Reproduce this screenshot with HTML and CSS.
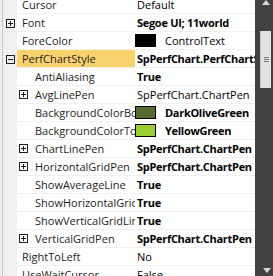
FILE: index.html
```html
<!DOCTYPE html>
<html>
<head>
<meta charset="utf-8">
<link rel="stylesheet" href="styles.css">
</head>
<body>
<div class="grid">
  <div class="rows">
    <div class="row"><div class="margin"></div><div class="name">Cursor</div><div class="value">Default</div></div>
    <div class="row"><div class="margin"><svg class="exp" width="9" height="9" viewBox="0 0 9 9"><rect x="0.5" y="0.5" width="8" height="8" fill="none" stroke="#1e1e1e"/><path d="M2 4.5H7M4.5 2V7" stroke="#1e1e1e"/></svg></div><div class="name">Font</div><div class="value bold">Segoe UI; 11world</div></div>
    <div class="row"><div class="margin"></div><div class="name">ForeColor</div><div class="value"><span class="swatch sw-black"></span>ControlText</div></div>
    <div class="row"><div class="margin"><svg class="exp" width="9" height="9" viewBox="0 0 9 9"><rect x="0.5" y="0.5" width="8" height="8" fill="none" stroke="#1e1e1e"/><path d="M2 4.5H7" stroke="#1e1e1e"/></svg></div><div class="name selected">PerfChartStyle</div><div class="value bold">SpPerfChart.PerfChartStyle</div></div>
    <div class="row"><div class="margin"></div><div class="name sub">AntiAliasing</div><div class="value bold">True</div></div>
    <div class="row"><div class="margin"></div><div class="name sub"><svg class="exp sub-exp" width="9" height="9" viewBox="0 0 9 9"><rect x="0.5" y="0.5" width="8" height="8" fill="none" stroke="#1e1e1e"/><path d="M2 4.5H7M4.5 2V7" stroke="#1e1e1e"/></svg>AvgLinePen</div><div class="value">SpPerfChart.ChartPen</div></div>
    <div class="row"><div class="margin"></div><div class="name sub">BackgroundColorBottom</div><div class="value bold"><span class="swatch sw-olive"></span>DarkOliveGreen</div></div>
    <div class="row"><div class="margin"></div><div class="name sub">BackgroundColorTop</div><div class="value bold"><span class="swatch sw-yellow"></span>YellowGreen</div></div>
    <div class="row"><div class="margin"></div><div class="name sub"><svg class="exp sub-exp" width="9" height="9" viewBox="0 0 9 9"><rect x="0.5" y="0.5" width="8" height="8" fill="none" stroke="#1e1e1e"/><path d="M2 4.5H7M4.5 2V7" stroke="#1e1e1e"/></svg>ChartLinePen</div><div class="value bold">SpPerfChart.ChartPen</div></div>
    <div class="row"><div class="margin"></div><div class="name sub"><svg class="exp sub-exp" width="9" height="9" viewBox="0 0 9 9"><rect x="0.5" y="0.5" width="8" height="8" fill="none" stroke="#1e1e1e"/><path d="M2 4.5H7M4.5 2V7" stroke="#1e1e1e"/></svg>HorizontalGridPen</div><div class="value bold">SpPerfChart.ChartPen</div></div>
    <div class="row"><div class="margin"></div><div class="name sub">ShowAverageLine</div><div class="value bold">True</div></div>
    <div class="row"><div class="margin"></div><div class="name sub">ShowHorizontalGridLines</div><div class="value bold">True</div></div>
    <div class="row"><div class="margin"></div><div class="name sub">ShowVerticalGridLines</div><div class="value bold">True</div></div>
    <div class="row"><div class="margin"></div><div class="name sub"><svg class="exp sub-exp" width="9" height="9" viewBox="0 0 9 9"><rect x="0.5" y="0.5" width="8" height="8" fill="none" stroke="#1e1e1e"/><path d="M2 4.5H7M4.5 2V7" stroke="#1e1e1e"/></svg>VerticalGridPen</div><div class="value bold">SpPerfChart.ChartPen</div></div>
    <div class="row"><div class="margin"></div><div class="name">RightToLeft</div><div class="value">No</div></div>
    <div class="row"><div class="margin"></div><div class="name">UseWaitCursor</div><div class="value">False</div></div>
  </div>
  <div class="scrollbar">
    <div class="arrow-up"></div>
    <div class="thumb"><span class="grip"></span></div>
    <div class="spacer"></div>
    <div class="arrow-down"></div>
  </div>
</div>
</body>
</html>
```
FILE: styles.css
```css
* { box-sizing: border-box; }
html, body { margin: 0; padding: 0; }
body {
  width: 273px;
  height: 276px;
  overflow: hidden;
  background: #ffffff;
  font-family: "Open Sans", "Noto Sans", sans-serif;
  font-size: 11px;
  color: #1e1e1e;
}
.grid {
  display: flex;
  height: 276px;
  overflow: hidden;
}
.rows {
  flex: 0 0 255px;
  margin-top: -4px;
  background: linear-gradient(to right, #f0f0f0 0, #f0f0f0 17px, #ffffff 17px);
  position: relative;
}
.rows::before {
  content: "";
  position: absolute;
  left: 2px;
  top: 0;
  bottom: -10px;
  width: 1px;
  background: #c9c9c9;
}
.row {
  display: grid;
  grid-template-columns: 17px 118px 120px;
  height: 18px;
}
.margin {
  display: flex;
  align-items: center;
  padding-left: 6px;
  background: #f0f0f0;
}
.name, .value {
  border-bottom: 1px solid #f0f0f0;
  line-height: 17px;
  white-space: nowrap;
  overflow: hidden;
  display: flex;
  align-items: center;
}
.name { padding-left: 5px; }
.name.sub { padding-left: 2px; }
.name.sub::before { content: ""; width: 16px; flex: 0 0 16px; }
.name.sub .sub-exp { margin-left: -16px; margin-right: 7px; }
.name.selected { background: #f9d26e; }
.value { padding-left: 2px; color: #000; }
.bold { font-weight: 700; letter-spacing: -0.3px; }
.exp { flex: 0 0 9px; display: block; }
.swatch {
  flex: 0 0 21px;
  width: 21px;
  height: 13px;
  margin-left: -2px;
  margin-right: 9px;
  border: 1px solid #000;
}
.sw-black { background: #000; }
.sw-olive { background: #556b2f; }
.sw-yellow { background: #9acd32; }
.scrollbar {
  flex: 0 0 18px;
  background: #424242;
  display: flex;
  flex-direction: column;
  align-items: flex-start;
}
.arrow-up {
  margin-top: 0;
  margin-left: 7px;
  width: 0;
  height: 0;
  border-left: 4.5px solid transparent;
  border-right: 4.5px solid transparent;
  border-bottom: 5px solid #d8d8d8;
}
.thumb {
  margin-top: 26px;
  margin-left: 5px;
  width: 11px;
  height: 57px;
  background: #e4e4e4;
  border-left: 1px solid #c4c4c4;
  display: flex;
  align-items: center;
  justify-content: center;
}
.grip {
  width: 5px;
  height: 5px;
  border-top: 1px solid #777;
  border-bottom: 1px solid #777;
  position: relative;
}
.grip::after {
  content: "";
  position: absolute;
  left: 0;
  right: 0;
  top: 1px;
  height: 1px;
  background: #777;
}
.spacer { flex: 1; }
.arrow-down {
  margin-bottom: 3px;
  margin-left: 8px;
  width: 0;
  height: 0;
  border-left: 4.5px solid transparent;
  border-right: 4.5px solid transparent;
  border-top: 5px solid #d8d8d8;
}
```
